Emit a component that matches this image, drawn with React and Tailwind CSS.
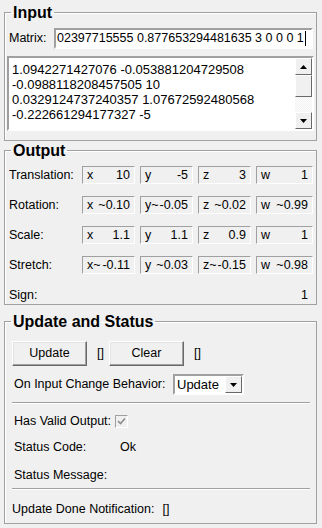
import React from "react";

const sunken = "border border-t-[#a0a0a0] border-l-[#a0a0a0] border-b-white border-r-white";

const Field = ({ label, value, wide }) => (
  <div
    className={`${sunken} h-[18px] flex items-center justify-between px-[4px] ${
      wide ? "w-[57px]" : "w-[53px]"
    }`}
  >
    <span>{label}</span>
    <span>{value}</span>
  </div>
);

const OutRow = ({ label, vals }) => (
  <div className="flex items-center h-[18px]">
    <div className="w-[73px]">{label}</div>
    <div className="flex gap-[5px]">
      {vals.map((v, i) => (
        <Field key={i} label={v[0]} value={v[1]} wide={i === 3} />
      ))}
    </div>
  </div>
);

const Button = ({ children }) => (
  <button className="w-[75px] h-[25px] bg-[#f0f0f0] border border-t-white border-l-white border-b-[#696969] border-r-[#696969] shadow-[inset_-1px_-1px_0_#a0a0a0,inset_1px_1px_0_#e3e3e3] flex items-center justify-center">
    {children}
  </button>
);

const Arrow = ({ up }) => (
  <svg width="7" height="4" viewBox="0 0 7 4">
    <path d={up ? "M3.5 0 L7 4 L0 4 Z" : "M0 0 L7 0 L3.5 4 Z"} fill="#000" />
  </svg>
);

const Legend = ({ children }) => (
  <legend className="ml-[6px] px-[2px] text-[16px] font-bold leading-[19px]">{children}</legend>
);

export default function App() {
  return (
    <div className="w-[322px] h-[528px] bg-[#f0f0f0] text-[12.5px] text-black font-['Liberation_Sans',Arial,sans-serif] overflow-hidden pt-[3px]">
      {/* Input */}
      <fieldset className="ml-[4px] w-[313px] h-[138px] border border-[#a0a0a0] shadow-[inset_1px_1px_0_#fff]">
        <Legend>Input</Legend>
        <div className="flex items-center pl-[4px] mt-[6px]">
          <span className="w-[45px]">Matrix:</span>
          <div className="w-[259px] h-[21px] border-2 border-t-[#a0a0a0] border-l-[#a0a0a0] border-b-white border-r-white bg-white flex items-center overflow-hidden pl-[1px]">
            <span className="whitespace-nowrap text-[12.5px]">02397715555 0.877653294481635 3 0 0 0 1</span>
            <span className="w-px h-[15px] bg-black ml-[1px] shrink-0" />
          </div>
        </div>
        <div className="ml-[2px] mt-[7px] w-[307px] h-[75px] border-2 border-t-[#a0a0a0] border-l-[#a0a0a0] border-b-white border-r-white bg-white flex">
          <div className="flex-1 pl-[3px] pt-[4px] text-[13px] leading-[15px] whitespace-nowrap overflow-hidden">
            <div>1.0942271427076 -0.053881204729508</div>
            <div>-0.0988118208457505 10</div>
            <div>0.0329124737240357 1.07672592480568</div>
            <div>-0.222661294177327 -5</div>
          </div>
          <div className="w-[17px] flex flex-col bg-[repeating-conic-gradient(#f0f0f0_0_25%,#fff_0_50%)] bg-[length:2px_2px]">
            <div className="h-[17px] bg-[#f0f0f0] border border-t-white border-l-white border-b-[#696969] border-r-[#696969] flex items-center justify-center">
              <Arrow up />
            </div>
            <div className="h-[22px] bg-[#f0f0f0] border border-t-white border-l-white border-b-[#696969] border-r-[#696969]" />
            <div className="flex-1" />
            <div className="h-[17px] bg-[#f0f0f0] border border-t-white border-l-white border-b-[#696969] border-r-[#696969] flex items-center justify-center">
              <Arrow />
            </div>
          </div>
        </div>
      </fieldset>

      {/* Output */}
      <fieldset className="ml-[4px] w-[313px] h-[164px] border border-[#a0a0a0] shadow-[inset_1px_1px_0_#fff]">
        <Legend>Output</Legend>
        <div className="pl-[4px] pt-[6px] flex flex-col gap-[12px]">
          <OutRow label="Translation:" vals={[["x", "10"], ["y", "-5"], ["z", "3"], ["w", "1"]]} />
          <OutRow label="Rotation:" vals={[["x", "~0.10"], ["y~", "-0.05"], ["z", "~0.02"], ["w", "~0.99"]]} />
          <OutRow label="Scale:" vals={[["x", "1.1"], ["y", "1.1"], ["z", "0.9"], ["w", "1"]]} />
          <OutRow label="Stretch:" vals={[["x~", "-0.11"], ["y", "~0.03"], ["z~", "-0.15"], ["w", "~0.98"]]} />
          <div className="flex justify-between items-center h-[18px] pr-[8px]">
            <span>Sign:</span>
            <span>1</span>
          </div>
        </div>
      </fieldset>

      {/* Update and Status */}
      <fieldset className="ml-[4px] mt-[7px] w-[313px] h-[212px] border border-[#a0a0a0] shadow-[inset_1px_1px_0_#fff]">
        <Legend>Update and Status</Legend>
        <div className="pl-[7px] pr-[6px]">
          <div className="flex items-center mt-[10px]">
            <Button>Update</Button>
            <span className="ml-[10px] w-[12px]">[]</span>
            <Button>Clear</Button>
            <span className="ml-[10px]">[]</span>
          </div>
          <div className="flex items-center mt-[8px] pl-[2px]">
            <span className="w-[159px]">On Input Change Behavior:</span>
            <div className="w-[71px] h-[21px] border-2 border-t-[#a0a0a0] border-l-[#a0a0a0] border-b-white border-r-white bg-white flex items-center">
              <span className="flex-1 pl-[2px] text-[13px]">Update</span>
              <div className="w-[17px] h-[17px] bg-[#f0f0f0] border border-t-white border-l-white border-b-[#696969] border-r-[#696969] flex items-center justify-center">
                <Arrow />
              </div>
            </div>
          </div>
          <div className="mt-[7px] h-[2px] border-t border-t-[#a0a0a0] border-b border-b-white" />
          <div className="flex items-center h-[20px] mt-[7px] pl-[2px]">
            <span>Has Valid Output:</span>
            <div className="ml-[4px] w-[13px] h-[13px] border border-t-[#a0a0a0] border-l-[#a0a0a0] border-b-white border-r-white bg-[#f0f0f0] flex items-center justify-center">
              <svg width="9" height="9" viewBox="0 0 9 9">
                <path d="M1 4 L3.5 6.5 L8 1.5" stroke="#8c8c8c" strokeWidth="1.6" fill="none" />
              </svg>
            </div>
          </div>
          <div className="flex items-center h-[20px] mt-[6px] pl-[2px]">
            <span className="w-[106px]">Status Code:</span>
            <span>Ok</span>
          </div>
          <div className="flex items-center h-[20px] mt-[8px] pl-[2px]">
            <span>Status Message:</span>
          </div>
          <div className="mt-[3px] h-[2px] border-t border-t-[#a0a0a0] border-b border-b-white" />
          <div className="flex items-center h-[20px] mt-[9px]">
            <span>Update Done Notification:</span>
            <span className="ml-[8px]">[]</span>
          </div>
        </div>
      </fieldset>
    </div>
  );
}
